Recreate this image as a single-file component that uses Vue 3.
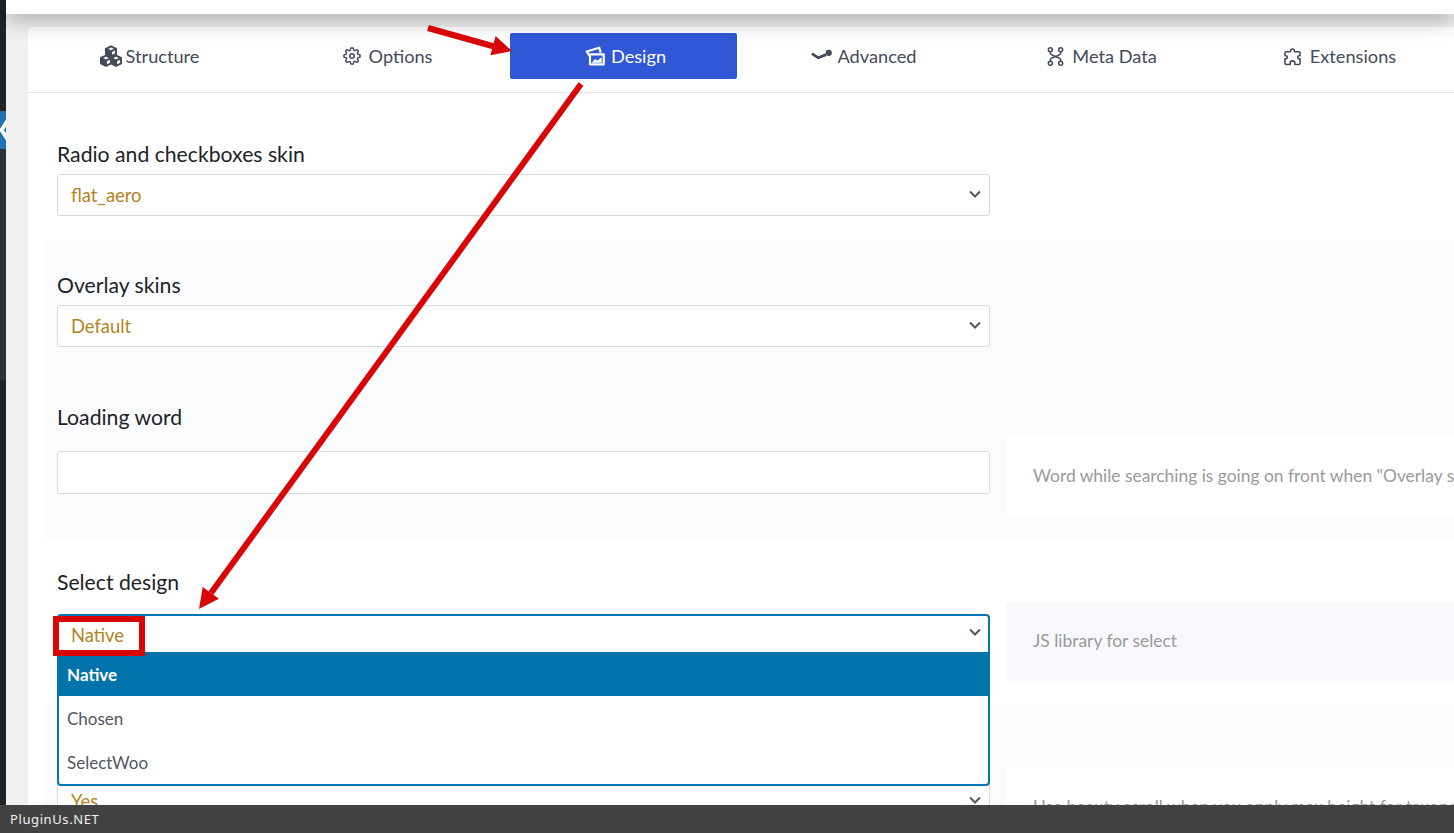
<script setup>
const tabs = [
  {
    label: 'Structure',
    size: 22,
    gap: 4,
    weight: 2.2,
    strokes: [
      'M12 1.5l5.5 2.7v5.6L12 12.5 6.5 9.8V4.2z', 'M6.5 4.2L12 7l5.5-2.8M12 7v5.5',
      'M6.5 11.5L12 14.2v5.9L6.5 22.8 1 20.1v-5.9z', 'M1 14.2l5.5 2.8 5.5-2.8M6.5 17v5.8',
      'M17.5 11.5l5.5 2.7v5.9l-5.5 2.7-5.5-2.7v-5.9z', 'M12 14.2l5.5 2.8 5.5-2.8M17.5 17v5.8'
    ],
    fills: ['M6.5 4.2L12 7v5.5L6.5 9.8z', 'M1 14.2l5.5 2.8v5.8L1 20.1z', 'M12 14.2l5.5 2.8v5.8L12 20.1z']
  },
  {
    label: 'Options',
    size: 18,
    gap: 8,
    circle: { cx: 12, cy: 12, r: 3 },
    strokes: ['M19.4 15a1.65 1.65 0 0 0 .33 1.82l.06.06a2 2 0 0 1 0 2.83 2 2 0 0 1-2.83 0l-.06-.06a1.65 1.65 0 0 0-1.82-.33 1.65 1.65 0 0 0-1 1.51V21a2 2 0 0 1-2 2 2 2 0 0 1-2-2v-.09A1.65 1.65 0 0 0 9 19.4a1.65 1.65 0 0 0-1.82.33l-.06.06a2 2 0 0 1-2.83 0 2 2 0 0 1 0-2.83l.06-.06a1.65 1.65 0 0 0 .33-1.82 1.65 1.65 0 0 0-1.51-1H3a2 2 0 0 1-2-2 2 2 0 0 1 2-2h.09A1.65 1.65 0 0 0 4.6 9a1.65 1.65 0 0 0-.33-1.82l-.06-.06a2 2 0 0 1 0-2.83 2 2 0 0 1 2.83 0l.06.06a1.65 1.65 0 0 0 1.82.33H9a1.65 1.65 0 0 0 1-1.51V3a2 2 0 0 1 2-2 2 2 0 0 1 2 2v.09a1.65 1.65 0 0 0 1 1.51 1.65 1.65 0 0 0 1.82-.33l.06-.06a2 2 0 0 1 2.83 0 2 2 0 0 1 0 2.83l-.06.06a1.65 1.65 0 0 0-.33 1.82V9a1.65 1.65 0 0 0 1.51 1H21a2 2 0 0 1 2 2 2 2 0 0 1-2 2h-.09a1.65 1.65 0 0 0-1.51 1z']
  },
  {
    label: 'Design',
    size: 20,
    gap: 6,
    weight: 2.6,
    active: true,
    strokes: ['M6 10h16.5v12H6z', 'M5.5 12L2 6.5 17 2l2 6'],
    fills: ['M8 20l4-4.5 3 2 5-4v6.5z']
  },
  {
    label: 'Advanced',
    size: 22,
    gap: 5,
    weight: 3,
    strokes: ['M1 9.5l7 4.5 8.5-3.5'],
    fills: ['M16 8.5a3.4 3.4 0 1 1 6.8 0 3.4 3.4 0 0 1-6.8 0z']
  },
  {
    label: 'Meta Data',
    size: 19,
    gap: 7,
    circles: [
      { cx: 5.5, cy: 3.5, r: 2.5 },
      { cx: 18.5, cy: 3.5, r: 2.5 },
      { cx: 5.5, cy: 20.5, r: 2.5 },
      { cx: 18.5, cy: 20.5, r: 2.5 }
    ],
    strokes: ['M5.5 6v2c0 3.5 13 4.5 13 8v2', 'M18.5 6v2c0 3.5-13 4.5-13 8v2']
  },
  {
    label: 'Extensions',
    size: 19,
    gap: 8,
    strokes: ['M9.5 5a2.5 2.5 0 0 1 5 0v1H20a1.5 1.5 0 0 1 1.5 1.5V11h-1a2 2 0 0 0 0 4h1v5.5A1.5 1.5 0 0 1 20 22h-5v-1.5a3 3 0 0 0-6 0V22H4a1.5 1.5 0 0 1-1.5-1.5V15h1a2 2 0 0 0 0-4h-1V7.5A1.5 1.5 0 0 1 4 6h5.5z']
  }
]

const options = ['Native', 'Chosen', 'SelectWoo']
</script>

<template>
  <div class="page">
    <div class="stage">
      <aside class="sidebar">
        <div class="side-top"></div>
        <div class="side-current">
          <svg width="6" height="38" viewBox="0 0 6 38">
            <polyline points="8,9 1.5,19 8,29" fill="none" stroke="#fff" stroke-width="4" />
          </svg>
        </div>
        <div class="side-sub"></div>
        <div class="side-rest"></div>
      </aside>

      <main class="main">
        <div class="topbar"></div>
        <section class="card">
          <nav class="tabs">
            <a v-for="tab in tabs" :key="tab.label" class="tab" :class="{ active: tab.active }" :style="{ gap: tab.gap + 'px' }">
              <svg :width="tab.size" :height="tab.size" viewBox="0 0 24 24" class="tab-icon">
                <path v-for="d in tab.fills" :key="d" :d="d" fill="currentColor" />
                <path v-for="d in tab.strokes" :key="d" :d="d" fill="none" stroke="currentColor" :stroke-width="tab.weight || 2" stroke-linejoin="round" />
                <circle v-if="tab.circle" v-bind="tab.circle" fill="none" stroke="currentColor" stroke-width="2" />
                <circle v-for="c in tab.circles" :key="c.cx + '-' + c.cy" v-bind="c" fill="none" stroke="currentColor" stroke-width="2" />
              </svg>
              <span>{{ tab.label }}</span>
            </a>
          </nav>

          <div class="rows">
            <div class="row first">
              <h4 class="label">Radio and checkboxes skin</h4>
              <div class="control">
                <div class="select">
                  <span>flat_aero</span>
                  <svg class="chevron" width="12" height="8" viewBox="0 0 12 8"><path d="M1 1.5l5 5 5-5" /></svg>
                </div>
              </div>
            </div>

            <div class="row tint second">
              <h4 class="label">Overlay skins</h4>
              <div class="control">
                <div class="select">
                  <span>Default</span>
                  <svg class="chevron" width="12" height="8" viewBox="0 0 12 8"><path d="M1 1.5l5 5 5-5" /></svg>
                </div>
              </div>
            </div>

            <div class="row tint loading">
              <h4 class="label">Loading word</h4>
              <div class="control">
                <div class="field"><div class="input"></div></div>
                <div class="help">Word while searching is going on front when "Overlay skins" is not in use on the page</div>
              </div>
            </div>

            <div class="row design">
              <h4 class="label">Select design</h4>
              <div class="control">
                <div class="field">
                  <div class="select open">
                    <span>Native</span>
                    <svg class="chevron" width="12" height="8" viewBox="0 0 12 8"><path d="M1 1.5l5 5 5-5" /></svg>
                    <ul class="dropdown">
                      <li v-for="(opt, i) in options" :key="opt" :class="{ picked: i === 0 }">{{ opt }}</li>
                    </ul>
                  </div>
                </div>
                <div class="help">JS library for select</div>
              </div>
            </div>

            <div class="row tint scroll">
              <div class="label"></div>
              <div class="control">
                <div class="field">
                  <div class="select">
                    <span>Yes</span>
                    <svg class="chevron" width="12" height="8" viewBox="0 0 12 8"><path d="M1 1.5l5 5 5-5" /></svg>
                  </div>
                </div>
                <div class="help">Use beauty scroll when you apply max height for taxonomy block</div>
              </div>
            </div>
          </div>
        </section>
      </main>
    </div>

    <footer class="footer">PluginUs.NET</footer>

    <!-- annotations painted on the screenshot -->
    <svg class="marks" width="1454" height="833" viewBox="0 0 1454 833">
      <line x1="428" y1="28" x2="496" y2="47" stroke="#d80606" stroke-width="6" />
      <polygon points="512,51 490.4,55.3 495.6,36" fill="#d80606" />
      <line x1="581" y1="84" x2="211" y2="593" stroke="#d80606" stroke-width="6" />
      <polygon points="199,609 218.9,598.7 202.7,586.9" fill="#d80606" />
      <rect x="56" y="619" width="86" height="34" fill="none" stroke="#d80606" stroke-width="6" />
    </svg>
  </div>
</template>

<style scoped>
.page {
  position: relative;
  display: flex;
  flex-direction: column;
  height: 100vh;
  overflow: hidden;
  background: #f0f0f1;
  font-family: "Lato", "Liberation Sans", sans-serif;
}

.stage {
  flex: 1;
  min-height: 0;
  display: flex;
  overflow: hidden;
}

.sidebar {
  flex: 0 0 6px;
  display: flex;
  flex-direction: column;
  background: #1d2327;
}
.side-top { height: 111px; }
.side-current { height: 38px; background: #2271b1; }
.side-current svg { display: block; }
.side-sub { height: 231px; background: #2c3338; }
.side-rest { flex: 1; }

.main {
  flex: 1;
  min-width: 0;
  display: flex;
  flex-direction: column;
}

.topbar {
  position: relative;
  z-index: 2;
  flex: 0 0 14px;
  background: #fff;
  box-shadow: 0 4px 22px rgba(0, 0, 0, 0.4);
}

.card {
  flex: 1;
  margin: 13px 0 0 22px;
  background: #fff;
  border-top-left-radius: 5px;
}

.tabs {
  display: flex;
  gap: 11px;
  height: 59px;
  padding: 6px 0 0 8px;
  border-bottom: 1px solid #e2e4e7;
}

.tab {
  flex: 0 0 227px;
  height: 46px;
  display: flex;
  align-items: center;
  justify-content: center;
  font-size: 18.2px;
  color: #444b5a;
  border-radius: 2px;
}
.tab span { margin-top: -1px; }
.tab.active {
  margin: 0 2px 0 -2px;
  padding-left: 4px;
  box-sizing: border-box;
  background: #2f57d6;
  color: #fff;
}
.tab-icon { flex: none; }

.rows {
  padding: 17px 0 0 17px;
}

.row {
  padding: 33px 0 25px 12px;
}
.row.tint { background: #fafbfd; }
.row.second { padding-bottom: 26px; }
.row.loading { padding-bottom: 21px; }
.row.design { padding-bottom: 23px; }

.label {
  margin: 0 0 9px;
  height: 22px;
  line-height: 22px;
  font-size: 21.2px;
  font-weight: 400;
  color: #1d2327;
}
.loading .label { margin-bottom: 7px; }

.control {
  display: flex;
  align-items: flex-start;
  gap: 16px;
}

.field { flex: 0 0 933px; }
.loading .field { padding-top: 16px; }
.design .field { padding-top: 12px; }
.scroll .field { padding-top: 12px; }

.select {
  position: relative;
  flex: 0 0 933px;
  width: 933px;
  height: 42px;
  box-sizing: border-box;
  display: flex;
  align-items: center;
  padding: 0 13px 1px;
  background: #fff;
  border: 1px solid #d9dbde;
  border-radius: 3px;
  font-size: 18.4px;
  color: #b5831e;
}

.chevron {
  position: absolute;
  right: 8px;
  top: 50%;
  margin-top: -5px;
  fill: none;
  stroke: #50575e;
  stroke-width: 2;
}

.select.open {
  z-index: 3;
  border: 2px solid #0078b4;
  border-radius: 4px 4px 0 0;
  padding: 1px 12px 0;
  height: 40px;
  margin-bottom: 2px;
}
.select.open .chevron { right: 7px; margin-top: -6px; }

.dropdown {
  position: absolute;
  left: -2px;
  right: -2px;
  top: 36px;
  margin: 0;
  padding: 0;
  list-style: none;
  background: #fff;
  border: 2px solid #0078b4;
  border-top: 0;
  border-radius: 0 0 4px 4px;
  font-size: 17px;
  color: #50575e;
}
.dropdown li {
  height: 44px;
  line-height: 46px;
  padding-left: 8px;
}
.dropdown li.picked {
  background: #0073aa;
  color: #fff;
  font-weight: 700;
}

.input {
  width: 933px;
  height: 43px;
  box-sizing: border-box;
  background: #fff;
  border: 1px solid #d9dbde;
  border-radius: 3px;
}

.help {
  flex: 1 0 600px;
  display: flex;
  align-items: center;
  padding: 0 0 2px 27px;
  box-sizing: border-box;
  white-space: nowrap;
  font-size: 17.4px;
  color: #9a9a9a;
  border-radius: 3px;
}
.loading .help { height: 82px; background: #fff; }
.design .help { height: 79px; background: #f7f9fc; }
.scroll .help { height: 79px; background: #fff; }

.footer {
  position: relative;
  z-index: 4;
  flex: 0 0 28px;
  display: flex;
  align-items: center;
  padding-left: 10px;
  background: #424242;
  color: #f1f1f1;
  font-family: "Noto Sans", sans-serif;
  font-size: 13px;
  letter-spacing: 0.6px;
}

.marks {
  position: absolute;
  left: 0;
  top: 0;
  z-index: 3;
  pointer-events: none;
}
</style>
